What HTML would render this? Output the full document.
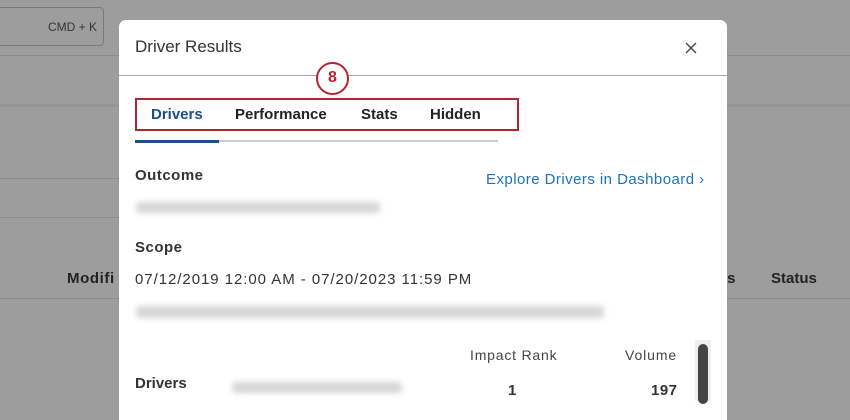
<!DOCTYPE html>
<html><head><meta charset="utf-8"><style>
*{margin:0;padding:0;box-sizing:border-box}
body{width:850px;height:401px;overflow:hidden;background:#9d9d9d;font-family:"Liberation Sans",sans-serif;position:relative;color:#333}
.a{position:absolute}
.blur{position:absolute;background:#d6d6d6;filter:blur(3px);border-radius:4px}
</style></head><body>
<div class="a" style="left:-10px;top:7px;width:114px;height:39px;border:1px solid #7a7a7a;border-radius:4px"></div>
<div class="a" style="left:48px;top:20px;font-size:12px;color:#333">CMD + K</div>
<div class="a" style="left:0;top:55px;width:850px;height:1px;background:#888"></div>
<div class="a" style="left:0;top:104px;width:850px;height:3px;background:#949494"></div>
<div class="a" style="left:0;top:178px;width:120px;height:1px;background:#8a8a8a"></div>
<div class="a" style="left:0;top:217px;width:120px;height:1px;background:#8a8a8a"></div>
<div class="a" style="left:0;top:298px;width:120px;height:1px;background:#8a8a8a"></div>
<div class="a" style="left:727px;top:298px;width:123px;height:1px;background:#8a8a8a"></div>
<div class="a" style="left:67px;top:270px;font-size:15px;font-weight:bold;color:#222;letter-spacing:0.6px">Modifi</div>
<div class="a" style="left:718px;top:270px;font-size:15px;font-weight:bold;color:#222">us</div>
<div class="a" style="left:771px;top:270px;font-size:15px;font-weight:bold;color:#222">Status</div>

<div class="a" style="left:119px;top:20px;width:608px;height:400px;background:#fff;border-radius:7px 7px 0 0"></div>
<div class="a" style="left:135px;top:37px;font-size:17px;color:#333">Driver Results</div>
<svg class="a" style="left:685px;top:42px" width="12" height="12"><path d="M1 1L11 11M11 1L1 11" stroke="#444" stroke-width="1.4"/></svg>
<div class="a" style="left:119px;top:75px;width:608px;height:1px;background:#aaa"></div>
<div class="a" style="left:316px;top:62px;width:33px;height:33px;border:2.5px solid #b5232f;border-radius:50%;background:#fff;color:#b5232f;font-size:16px;font-weight:bold;text-align:center;line-height:28px">8</div>
<div class="a" style="left:135px;top:98px;width:384px;height:33px;border:2.5px solid #b5232f"></div>
<div class="a" style="left:151px;top:106px;font-size:15px;font-weight:bold;color:#1a4f8a">Drivers</div>
<div class="a" style="left:235px;top:106px;font-size:15px;font-weight:bold;color:#222">Performance</div>
<div class="a" style="left:361px;top:106px;font-size:15px;font-weight:bold;color:#222">Stats</div>
<div class="a" style="left:430px;top:106px;font-size:15px;font-weight:bold;color:#222">Hidden</div>
<div class="a" style="left:135px;top:140px;width:363px;height:2px;background:#ccc"></div>
<div class="a" style="left:135px;top:140px;width:84px;height:3px;background:#1a4f8a"></div>

<div class="a" style="left:135px;top:167px;font-size:15px;font-weight:bold;color:#333;letter-spacing:0.5px">Outcome</div>
<div class="a" style="left:486px;top:171px;font-size:15px;color:#1a73c2;letter-spacing:0.45px">Explore Drivers in Dashboard ›</div>
<div class="blur" style="left:136px;top:202px;width:244px;height:11px"></div>
<div class="a" style="left:135px;top:239px;font-size:15px;font-weight:bold;color:#333;letter-spacing:0.5px">Scope</div>
<div class="a" style="left:135px;top:271px;font-size:15px;color:#333;letter-spacing:0.95px">07/12/2019 12:00 AM - 07/20/2023 11:59 PM</div>
<div class="blur" style="left:136px;top:306px;width:468px;height:12px"></div>
<div class="a" style="left:470px;top:347px;font-size:14px;color:#444;letter-spacing:0.8px">Impact Rank</div>
<div class="a" style="left:625px;top:347px;font-size:14px;color:#444;letter-spacing:0.9px">Volume</div>
<div class="a" style="left:135px;top:375px;font-size:15px;font-weight:bold;color:#333">Drivers</div>
<div class="blur" style="left:232px;top:382px;width:170px;height:11px"></div>
<div class="a" style="left:508px;top:382px;font-size:15px;font-weight:bold;color:#333">1</div>
<div class="a" style="left:651px;top:382px;font-size:15px;font-weight:bold;color:#333;letter-spacing:0.5px">197</div>
<div class="a" style="left:695px;top:340px;width:16px;height:61px;background:#eee"></div>
<div class="a" style="left:698px;top:344px;width:10px;height:60px;background:#444;border-radius:5px"></div>
</body></html>
